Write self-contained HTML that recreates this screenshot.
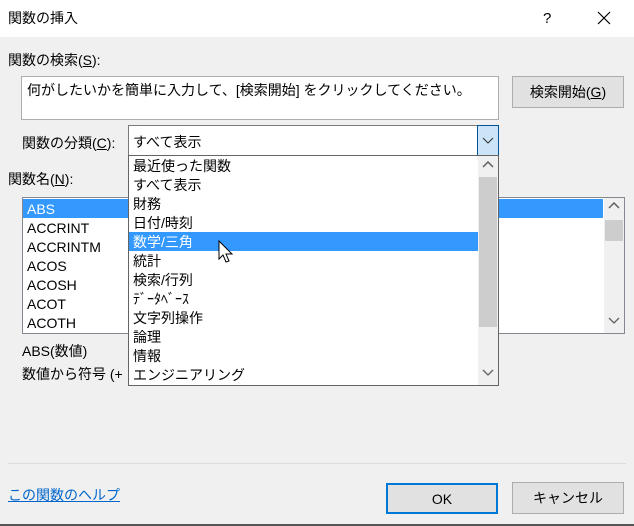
<!DOCTYPE html>
<html><head><meta charset="utf-8"><style>
*{margin:0;padding:0;box-sizing:border-box}
body{width:634px;height:526px;background:#f0f0f0;font-family:"Liberation Sans","Noto Sans CJK JP",sans-serif;font-size:14px;color:#000;position:relative;overflow:hidden}
.a{position:absolute;white-space:nowrap;line-height:19px}
.box{position:absolute;background:#fff;border:1px solid #7a7a7a}
.btn{position:absolute;background:#e1e1e1;border:1px solid #adadad;text-align:center}
.it{height:19px;line-height:21px;padding-left:4px;white-space:nowrap}
.sel{background:#3399ff;color:#fff}
.sb{position:absolute;background:#f0f0f0}
.th{position:absolute;background:#cdcdcd}
u{text-decoration:underline}
</style></head><body>
<div style="position:absolute;left:0;top:0;width:634px;height:37px;background:#fff"></div>
<div class="a" style="left:8px;top:9px">関数の挿入</div>
<div class="a" style="left:543px;top:9px;font-size:15px">?</div>
<svg style="position:absolute;left:597px;top:11px" width="14" height="14"><path d="M1 1L13 13M13 1L1 13" stroke="#000" stroke-width="1.2"/></svg>

<div class="a" style="left:8px;top:51px">関数の検索(<u>S</u>):</div>
<div class="box" style="left:21px;top:76px;width:478px;height:44px;border-color:#adadad"></div>
<div class="a" style="left:27px;top:81px">何がしたいかを簡単に入力して、[検索開始] をクリックしてください。</div>
<div class="btn" style="left:512px;top:76px;width:112px;height:32px;line-height:31px">検索開始(<u>G</u>)</div>

<div class="a" style="left:22px;top:134px">関数の分類(<u>C</u>):</div>
<div class="box" style="left:128px;top:125px;width:371px;height:31px"></div>
<div class="a" style="left:133px;top:133px">すべて表示</div>
<div style="position:absolute;left:477px;top:125px;width:22px;height:31px;background:#cce4f7;border:1px solid #005499"></div>
<svg style="position:absolute;left:482px;top:137px" width="12" height="8"><path d="M1 1L6 6L11 1" stroke="#333" fill="none"/></svg>

<div class="a" style="left:8px;top:170px">関数名(<u>N</u>):</div>
<div class="box" style="left:22px;top:197px;width:603px;height:137px;border-color:#828790">
 <div style="padding-top:1px;width:580px">
 <div class="it sel">ABS</div><div class="it">ACCRINT</div><div class="it">ACCRINTM</div><div class="it">ACOS</div><div class="it">ACOSH</div><div class="it">ACOT</div><div class="it">ACOTH</div>
 </div>
 <div class="sb" style="left:581px;top:0;width:20px;height:135px"></div>
 <div class="th" style="left:582px;top:22px;width:18px;height:21px"></div>
</div>
<svg style="position:absolute;left:608px;top:202px" width="12" height="8"><path d="M1 6L6 1L11 6" stroke="#606060" stroke-width="1.5" fill="none"/></svg>
<svg style="position:absolute;left:608px;top:317px" width="12" height="8"><path d="M1 1L6 6L11 1" stroke="#606060" stroke-width="1.3" fill="none"/></svg>

<div class="a" style="left:22px;top:342px">ABS(数値)</div>
<div class="a" style="left:22px;top:365px">数値から符号 (+</div>

<div class="box" style="left:128px;top:155px;width:371px;height:231px;border-color:#646464">
 <div style="width:349px">
 <div class="it">最近使った関数</div><div class="it">すべて表示</div><div class="it">財務</div><div class="it">日付/時刻</div><div class="it sel">数学/三角</div><div class="it">統計</div><div class="it">検索/行列</div><div class="it">ﾃﾞｰﾀﾍﾞｰｽ</div><div class="it">文字列操作</div><div class="it">論理</div><div class="it">情報</div><div class="it">エンジニアリング</div>
 </div>
 <div class="sb" style="left:349px;top:0;width:20px;height:229px"></div>
 <div class="th" style="left:350px;top:21px;width:18px;height:150px"></div>
</div>
<svg style="position:absolute;left:482px;top:161px" width="12" height="8"><path d="M1 6L6 1L11 6" stroke="#606060" stroke-width="1.5" fill="none"/></svg>
<svg style="position:absolute;left:482px;top:369px" width="12" height="8"><path d="M1 1L6 6L11 1" stroke="#606060" stroke-width="1.3" fill="none"/></svg>
<svg style="position:absolute;left:218px;top:240px" width="18" height="26"><path d="M1 1L1 19L5 15L8 22L11 21L8 14L14 14Z" fill="#fff" stroke="#000" stroke-width="1"/></svg>

<div style="position:absolute;left:8px;top:463px;width:618px;height:1px;background:#dcdcdc"></div>
<div class="a" style="left:8px;top:486px;color:#0066cc;text-decoration:underline">この関数のヘルプ</div>
<div class="btn" style="left:386px;top:483px;width:112px;height:31px;line-height:28px;border:2px solid #0078d7">OK</div>
<div class="btn" style="left:512px;top:482px;width:112px;height:32px;line-height:31px">キャンセル</div>
<div style="position:absolute;left:0;top:524px;width:634px;height:2px;background:#555"></div>
</body></html>
